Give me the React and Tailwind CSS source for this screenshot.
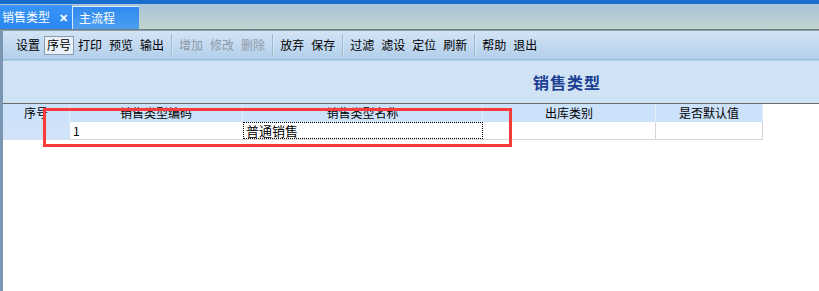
import React from 'react';

const groups = [
  [
    { label: '设置' },
    { label: '序号', active: true },
    { label: '打印' },
    { label: '预览' },
    { label: '输出' },
  ],
  [
    { label: '增加', disabled: true },
    { label: '修改', disabled: true },
    { label: '删除', disabled: true },
  ],
  [{ label: '放弃' }, { label: '保存' }],
  [{ label: '过滤' }, { label: '滤设' }, { label: '定位' }, { label: '刷新' }],
  [{ label: '帮助' }, { label: '退出' }],
];

const columns = [
  { name: '序号', w: 'w-[67px]' },
  { name: '销售类型编码', w: 'w-[173px]' },
  { name: '销售类型名称', w: 'w-[240px]' },
  { name: '出库类别', w: 'w-[173px]' },
  { name: '是否默认值', w: 'w-[107px]' },
];

function ToolButton({ label, active, disabled }) {
  return (
    <span
      className={`h-[19px] flex items-center px-[2px] leading-none ${
        active ? 'border border-[#8b9cae] bg-[#e9f0f8]' : 'border border-transparent'
      } ${disabled ? 'text-[#8d9aa8]' : 'text-black'}`}
    >
      {label}
    </span>
  );
}

export default function App() {
  return (
    <div className="w-[819px] h-[291px] overflow-hidden bg-white relative text-[12px] font-['Noto_Sans_CJK_SC','Noto_Sans',sans-serif]">
      {/* tab strip */}
      <div className="h-[4px] bg-[#176ecd]" />
      <div className="h-[25px] bg-gradient-to-b from-[#a9c3d9] to-[#c1d4cf] flex items-end">
        <div className="w-[72px] h-[24px] bg-gradient-to-b from-[#3a95f6] to-[#2a86f2] flex items-center text-white pl-[2px]">
          <span className="leading-none">销售类型</span>
          <span className="ml-[9px] text-[11px] font-bold leading-none">✕</span>
        </div>
        <div className="w-[67px] h-[23px] bg-gradient-to-b from-[#2f8af0] to-[#4c9ff0] border-t border-l border-[#dbe9f8] flex items-center text-white pl-[6px]">
          <span className="leading-none">主流程</span>
        </div>
      </div>
      <div className="h-[1px] bg-[#6d7c8a]" />
      <div className="h-[1px] bg-[#8d9dab]" />

      <div className="border-l-[3px] border-[#7b96b2] h-full">
        {/* toolbar */}
        <div className="h-[28px] bg-gradient-to-b from-[#d3e4f5] to-[#b3cfeb] flex items-center pl-[10px]">
          {groups.map((g, gi) => (
            <div key={gi} className="flex items-center">
              {gi > 0 && <div className="w-[2px] h-[22px] ml-[4px] mr-[3px] border-l border-[#9fb6cf] bg-[#d6e5f4]" />}
              <div className="flex items-center gap-[1px]">
                {g.map((b) => (
                  <ToolButton key={b.label} {...b} />
                ))}
              </div>
            </div>
          ))}
        </div>
        <div className="h-[1px] bg-[#84c4e4]" />
        <div className="h-[1px] bg-[#bccbd9]" />

        {/* title panel */}
        <div className="h-[42px] bg-[#d0e3f5] flex items-center pl-[530px]">
          <span className="text-[16px] font-bold text-[#1c3f93] tracking-[1px]">销售类型</span>
        </div>
        <div className="h-[1px] bg-[#6b6b6b]" />

        {/* grid */}
        <div className="flex h-[18px]">
          {columns.map((c) => (
            <div
              key={c.name}
              className={`${c.w} bg-[#cce2fb] border-r border-[#e3ecf5] flex items-center justify-center leading-none`}
            >
              {c.name}
            </div>
          ))}
        </div>
        <div className="flex h-[18px]">
          <div className="w-[67px] bg-[#cfe2f8] border-b border-[#dde6ef]" />
          <div className="w-[173px] border-b border-[#d6d6d6] flex items-center pl-[3px] leading-none">1</div>
          <div className="w-[240px] border-b border-[#d6d6d6] flex items-center">
            <div className="w-full h-[17px] border border-dotted border-black flex items-center pl-[2px] text-[13px] leading-none">
              普通销售
            </div>
          </div>
          <div className="w-[173px] border-b border-r border-[#d6d6d6]" />
          <div className="w-[107px] border-b border-r border-[#d6d6d6]" />
        </div>
      </div>

      {/* annotation */}
      <div className="absolute left-[43px] top-[108px] w-[469px] h-[39px] border-[3px] border-[#fb3a3a]" />
    </div>
  );
}
